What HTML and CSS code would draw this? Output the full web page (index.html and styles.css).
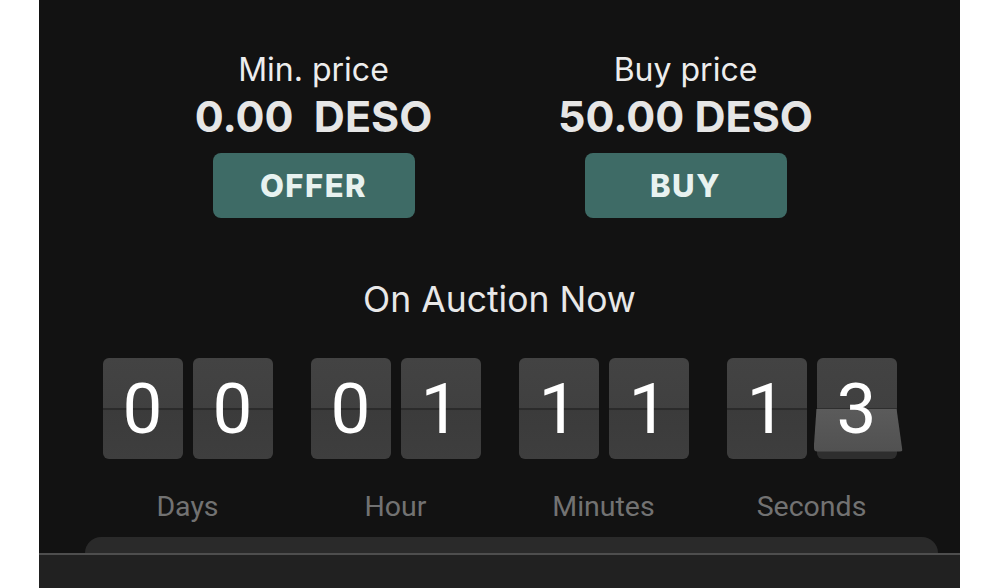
FILE: index.html
```html
<!DOCTYPE html>
<html lang="en">

<head>
    <meta charset="utf-8">
    <meta name="viewport" content="width=device-width, initial-scale=1.0">
    <title>On Auction Now</title>
    <link rel="stylesheet" href="styles.css">
</head>

<body>

    <div class="panel">
        <div class="prices">
            <div class="price">
                <p class="price-label">Min. price</p>
                <p class="price-value">0.00&nbsp; DESO</p>
                <button class="knap">OFFER</button>
            </div>
            <div class="price">
                <p class="price-label">Buy price</p>
                <p class="price-value">50.00 DESO</p>
                <button class="knap">BUY</button>
            </div>
        </div>

        <h2 class="auction-title">On Auction Now</h2>

        <div class="countdown">
            <div class="enhed">
                <div class="cards">
                    <div class="flip">0</div>
                    <div class="flip">0</div>
                </div>
                <p class="enhed-navn">Days</p>
            </div>
            <div class="enhed">
                <div class="cards">
                    <div class="flip">0</div>
                    <div class="flip">1</div>
                </div>
                <p class="enhed-navn">Hour</p>
            </div>
            <div class="enhed">
                <div class="cards">
                    <div class="flip">1</div>
                    <div class="flip">1</div>
                </div>
                <p class="enhed-navn">Minutes</p>
            </div>
            <div class="enhed">
                <div class="cards">
                    <div class="flip">1</div>
                    <div class="flip flipper"><span class="flap"></span><span class="tal">3</span></div>
                </div>
                <p class="enhed-navn">Seconds</p>
            </div>
        </div>

        <div class="sheet"></div>
        <div class="navbar"></div>
    </div>

</body>

</html>
```

FILE: styles.css
```css
body {
    margin: 0;
    background-color: white;
    font-family: 'Inter', 'Noto Sans', sans-serif;
}

p {
    margin: 0;
}

.panel {
    width: 921px;
    height: 588px;
    margin-left: 39px;
    background-color: #121212;
    display: flex;
    flex-direction: column;
    overflow: hidden;
}

.prices {
    display: flex;
    justify-content: center;
    gap: 72px;
    padding-top: 51px;
}

.price {
    width: 300px;
    display: flex;
    flex-direction: column;
    align-items: center;
}

.price-label {
    font-size: 32px;
    line-height: 38px;
    color: #ededed;
}

.price-value {
    margin-top: 1px;
    font-size: 43px;
    font-weight: 700;
    line-height: 52px;
    color: #e6e6e6;
}

.knap {
    width: 202px;
    height: 65px;
    margin-top: 11px;
    border: none;
    border-radius: 8px;
    background-color: #3e6b66;
    color: #e8f2f0;
    font-family: 'Inter', sans-serif;
    font-size: 31px;
    font-weight: 800;
    letter-spacing: 1.5px;
    cursor: pointer;
}

.auction-title {
    margin: 61px 0 0 0;
    font-size: 35.5px;
    font-weight: 400;
    line-height: 42px;
    text-align: center;
    color: #e8e8e8;
}

.countdown {
    display: flex;
    justify-content: center;
    gap: 38px;
    margin-top: 37px;
}

.enhed {
    width: 170px;
    display: flex;
    flex-direction: column;
    align-items: center;
}

.cards {
    display: flex;
    gap: 10px;
}

.flip {
    position: relative;
    width: 80px;
    height: 101px;
    border-radius: 6px;
    background: linear-gradient(#434343 0%, #404040 50%, #2b2b2b 50%, #2b2b2b 51%, #3b3b3b 52%, #3e3e3e 100%);
    color: white;
    font-family: 'Roboto', sans-serif;
    font-size: 71px;
    line-height: 101px;
    text-align: center;
}

.flipper {
    background: linear-gradient(#434343 0%, #404040 50%, #2e2e2e 50%);
}

.flap {
    position: absolute;
    left: -3px;
    right: -6px;
    top: 50%;
    height: 43px;
    background: linear-gradient(#5b5b5b, #515151);
    clip-path: polygon(3px 0, calc(100% - 6px) 0, 100% 100%, 0 100%);
    border-radius: 0 0 4px 4px;
}

.tal {
    position: relative;
}

.enhed-navn {
    margin-top: 32px;
    font-family: 'Roboto', sans-serif;
    font-size: 28.5px;
    line-height: 32px;
    color: #727272;
}

.sheet {
    margin: 14px 22px 0 46px;
    height: 16px;
    border-radius: 18px 18px 0 0;
    background-color: #2a2a2a;
}

.navbar {
    flex: 1;
    border-top: 2px solid #4e4e4e;
    background-color: #212121;
}
```
